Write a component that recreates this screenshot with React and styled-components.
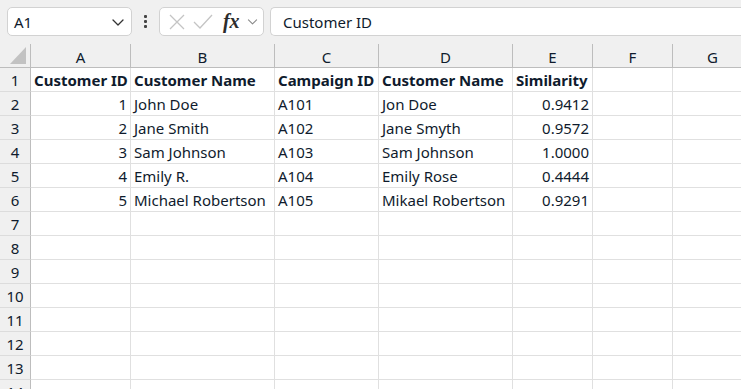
import React from 'react'
import styled, { createGlobalStyle } from 'styled-components'

const GlobalStyle = createGlobalStyle`
  html, body {
    margin: 0;
    padding: 0;
    background: #ffffff;
    overflow: hidden;
  }
  body {
    font-family: "Noto Sans", "Open Sans", sans-serif;
    color: #0f1b2d;
  }
`

const COLS = [
  { key: 'A', width: 100 },
  { key: 'B', width: 144 },
  { key: 'C', width: 104 },
  { key: 'D', width: 134 },
  { key: 'E', width: 80 },
  { key: 'F', width: 80 },
  { key: 'G', width: 80 }
]

const ROWS = [
  [{ v: 'Customer ID', bold: true }, { v: 'Customer Name', bold: true }, { v: 'Campaign ID', bold: true }, { v: 'Customer Name', bold: true }, { v: 'Similarity', bold: true }],
  [{ v: '1', right: true }, { v: 'John Doe' }, { v: 'A101' }, { v: 'Jon Doe' }, { v: '0.9412', right: true }],
  [{ v: '2', right: true }, { v: 'Jane Smith' }, { v: 'A102' }, { v: 'Jane Smyth' }, { v: '0.9572', right: true }],
  [{ v: '3', right: true }, { v: 'Sam Johnson' }, { v: 'A103' }, { v: 'Sam Johnson' }, { v: '1.0000', right: true }],
  [{ v: '4', right: true }, { v: 'Emily R.' }, { v: 'A104' }, { v: 'Emily Rose' }, { v: '0.4444', right: true }],
  [{ v: '5', right: true }, { v: 'Michael Robertson' }, { v: 'A105' }, { v: 'Mikael Robertson' }, { v: '0.9291', right: true }]
]

const ROW_COUNT = 14

const Page = styled.div`
  width: 741px;
  height: 389px;
  overflow: hidden;
  background: #ffffff;
`

const Toolbar = styled.div`
  height: 44px;
  box-sizing: border-box;
  background: #f0f0f0;
  display: flex;
  align-items: flex-start;
  padding: 7px 0 0 7px;
  gap: 6px;
`

const Box = styled.div`
  height: 29px;
  box-sizing: border-box;
  background: #ffffff;
  border: 1px solid #d2d2d2;
  border-radius: 5px;
  display: flex;
  align-items: center;
`

const NameBox = styled(Box)`
  width: 125px;
  padding: 0 5px 0 6px;
  justify-content: space-between;
  font-size: 15px;
`

const Dots = styled.div`
  width: 15px;
  height: 29px;
  display: flex;
  flex-direction: column;
  align-items: center;
  justify-content: center;
  gap: 2px;

  span {
    width: 3px;
    height: 3px;
    background: #444;
    border-radius: 1px;
  }
`

const FxBox = styled(Box)`
  width: 105px;
  padding: 0 4px 0 8px;
  justify-content: space-between;
`

const Fx = styled.span`
  font-family: "Liberation Serif", serif;
  font-style: italic;
  font-weight: 700;
  font-size: 20px;
  color: #2c2c2c;
  line-height: 1;
  margin: 0 0 2px 2px;
`

const FormulaBox = styled(Box)`
  flex: 1;
  border-right: none;
  border-radius: 5px 0 0 5px;
  padding-left: 12px;
  font-size: 15px;
`

const Grid = styled.div`
  display: grid;
  grid-template-columns: 31px ${COLS.map(c => `${c.width}px`).join(' ')};
  grid-template-rows: 24px;
  grid-auto-rows: 24px;
`

const Corner = styled.div`
  background: #f0f0f0;
  border-right: 1px solid #bdbdbd;
  border-bottom: 1px solid #bdbdbd;
  box-sizing: border-box;
  position: relative;

  &::after {
    content: '';
    position: absolute;
    left: 10px;
    bottom: 3px;
    width: 0;
    height: 0;
    border-left: 16px solid transparent;
    border-bottom: 17px solid #c2c2c2;
  }
`

const ColHead = styled.div`
  background: #f0f0f0;
  border-right: 1px solid #bdbdbd;
  border-bottom: 1px solid #bdbdbd;
  box-sizing: border-box;
  display: flex;
  align-items: center;
  justify-content: center;
  font-size: 15px;
  padding-top: 2px;
`

const RowHead = styled.div`
  background: #f0f0f0;
  border-right: 1px solid #bdbdbd;
  border-bottom: 1px solid #dcdcdc;
  box-sizing: border-box;
  display: flex;
  align-items: center;
  justify-content: center;
  font-size: 15px;
  padding-top: 1px;
`

const Cell = styled.div`
  border-right: 1px solid #e0e0e0;
  border-bottom: 1px solid #e0e0e0;
  box-sizing: border-box;
  display: flex;
  align-items: center;
  justify-content: ${({ $right }) => ($right ? 'flex-end' : 'flex-start')};
  padding: 1px 3px 0 3px;
  font-size: 15px;
  font-weight: ${({ $bold }) => ($bold ? 700 : 400)};
  white-space: nowrap;
  overflow: hidden;
`

const Chevron = ({ size = 14, color = '#333' }) => (
  <svg width={size} height={size} viewBox="0 0 16 16" fill="none">
    <path d="M3 6l5 5 5-5" stroke={color} strokeWidth="1.3" strokeLinecap="round" strokeLinejoin="round" />
  </svg>
)

const Cross = () => (
  <svg width="18" height="18" viewBox="0 0 18 18" fill="none">
    <path d="M2 2l14 14M16 2L2 16" stroke="#c4c4c4" strokeWidth="1.3" />
  </svg>
)

const Check = () => (
  <svg width="22" height="18" viewBox="0 0 22 18" fill="none">
    <path d="M2 9l6 6L20 2" stroke="#c4c4c4" strokeWidth="1.3" />
  </svg>
)

const FormulaBar = () => (
  <Toolbar>
    <NameBox>
      <span>A1</span>
      <Chevron size={16} />
    </NameBox>
    <Dots>
      <span />
      <span />
      <span />
    </Dots>
    <FxBox>
      <Cross />
      <Check />
      <Fx>fx</Fx>
      <Chevron size={13} color="#888" />
    </FxBox>
    <FormulaBox>Customer ID</FormulaBox>
  </Toolbar>
)

const Sheet = () => (
  <Grid>
    <Corner />
    {COLS.map(c => (
      <ColHead key={c.key}>{c.key}</ColHead>
    ))}
    {Array.from({ length: ROW_COUNT }, (_, r) => (
      <React.Fragment key={r}>
        <RowHead>{r + 1}</RowHead>
        {COLS.map((c, ci) => {
          const cell = ROWS[r] && ROWS[r][ci]
          return (
            <Cell key={c.key} $bold={cell && cell.bold} $right={cell && cell.right}>
              {cell ? cell.v : ''}
            </Cell>
          )
        })}
      </React.Fragment>
    ))}
  </Grid>
)

const App = () => (
  <Page>
    <GlobalStyle />
    <FormulaBar />
    <Sheet />
  </Page>
)

export default App
